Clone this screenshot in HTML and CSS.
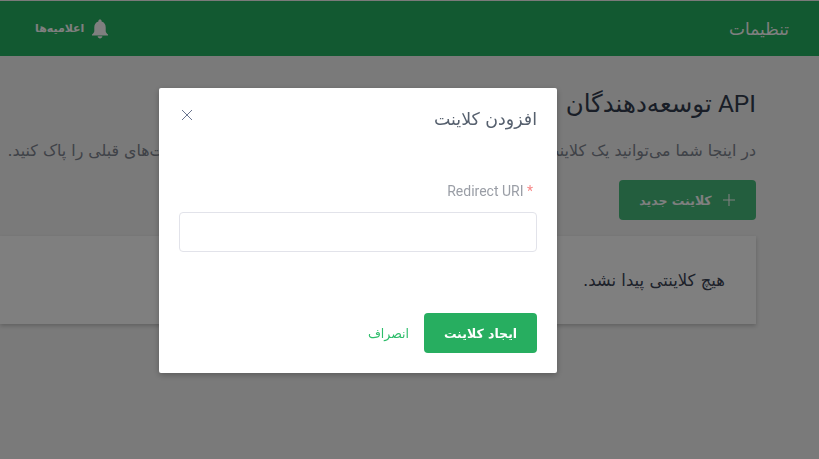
FILE: index.html
```html
<!DOCTYPE html>
<html lang="fa" dir="rtl">
<head>
    <meta charset="UTF-8">
    <meta name="viewport" content="width=device-width, initial-scale=1.0">
    <title>تنظیمات</title>
    <link rel="stylesheet" href="styles.css">
</head>
<body>
    <header class="topbar">
        <div class="topbar-title">تنظیمات</div>
        <div class="notif">
            <svg class="notif-icon" viewBox="0 0 20 20" width="20" height="20">
                <path fill="currentColor" d="M10 0.5c-1 0-1.600.7-1.600 1.600v.5C5.700 3.300 4.300 5.700 4.300 8.300v3.700c0 1.400-.9 2.400-2.300 3.400v1.100h16v-1.100c-1.400-1-2.300-2-2.300-3.400V8.300c0-2.600-1.400-5-4.100-5.700v-.5c0-.9-.6-1.600-1.600-1.600z"/>
                <path fill="currentColor" d="M7.600 17.300h4.800c-.2 1.300-1.200 2.200-2.400 2.200s-2.200-.9-2.400-2.200z"/>
            </svg>
            <span>اعلامیه‌ها</span>
        </div>
    </header>

    <main class="content">
        <h1 class="page-title">API توسعه‌دهندگان</h1>
        <p class="page-desc">در اینجا شما می‌توانید یک کلاینت جدید ایجاد کنید و در صورت نیاز نداشتن به آن‌ها دیگر کلاینت‌های قبلی را پاک کنید.</p>
        <button class="btn btn-new">
            <svg viewBox="0 0 14 14" width="14" height="14">
                <path stroke="currentColor" stroke-width="1.100" fill="none" d="M7 1v12M1 7h12"/>
            </svg>
            <span>کلاینت جدید</span>
        </button>
        <section class="empty-card">هیچ کلاینتی پیدا نشد.</section>
    </main>

    <div class="overlay">
        <div class="modal">
            <div class="modal-head">
                <h2 class="modal-title">افزودن کلاینت</h2>
                <svg class="modal-close" viewBox="0 0 12 12" width="12" height="12">
                    <path stroke="currentColor" stroke-width="1" fill="none" d="M1 1l10 10M11 1L1 11"/>
                </svg>
            </div>
            <div class="field">
                <label class="field-label"><span class="req">*</span> <bdi>Redirect URI</bdi></label>
                <input class="field-input" type="text">
            </div>
            <div class="modal-foot">
                <button class="btn btn-create">ایجاد کلاینت</button>
                <a class="link-cancel">انصراف</a>
            </div>
        </div>
    </div>
</body>
</html>
```

FILE: styles.css
```css
html, body {
    height: 100%;
}
body {
    margin: 0;
    background-color: #f4f4f4;
    font-family: "DejaVu Sans", "Noto Sans", sans-serif;
    color: #333c4e;
    overflow: hidden;
}
.topbar {
    margin-top: 1px;
    height: 55px;
    background-color: #25b262;
    color: #fff;
    display: flex;
    justify-content: space-between;
    align-items: center;
    padding: 0 30px 0 35px;
}
.topbar-title {
    font-size: 17px;
}
.notif {
    display: flex;
    align-items: center;
    gap: 6px;
    font-size: 11px;
    font-weight: bold;
}
.notif-icon {
    color: #fff;
}
.content {
    padding: 0 63px 0 0;
    display: flex;
    flex-direction: column;
    align-items: flex-start;
}
.page-title {
    margin: 33px 0 0;
    font-family: "Roboto", "DejaVu Sans", sans-serif;
    font-size: 24.500px;
    font-weight: normal;
    line-height: 30px;
    white-space: nowrap;
}
.page-desc {
    margin: 21px 0 0;
    font-size: 15.800px;
    line-height: 22px;
    color: #7f8590;
    white-space: nowrap;
}
.btn {
    border: none;
    border-radius: 4px;
    color: #fff;
    font-family: inherit;
    font-weight: bold;
    font-size: 12.500px;
}
.btn-new {
    margin-top: 18px;
    width: 137px;
    height: 40px;
    background-color: #46bd7c;
    display: flex;
    justify-content: center;
    align-items: center;
    gap: 10px;
}
.empty-card {
    margin-top: 16px;
    width: 756px;
    height: 88px;
    box-sizing: border-box;
    padding-right: 31px;
    background-color: #fff;
    box-shadow: 0 2px 4px rgba(0, 0, 0, 0.2);
    display: flex;
    align-items: center;
    font-size: 16.500px;
    color: #3a4354;
}
.overlay {
    position: fixed;
    inset: 0;
    background-color: rgba(0, 0, 0, 0.5);
    display: flex;
    justify-content: flex-start;
    align-items: flex-start;
    padding: 88px 262px 0 0;
}
.modal {
    width: 398px;
    height: 285px;
    box-sizing: border-box;
    padding: 0 20px 20px;
    background-color: #fff;
    border-radius: 2px;
    box-shadow: 0 2px 6px rgba(0, 0, 0, 0.25);
    display: flex;
    flex-direction: column;
}
.modal-head {
    display: flex;
    justify-content: space-between;
    align-items: flex-start;
    height: 70px;
    padding-top: 17px;
    box-sizing: border-box;
}
.modal-title {
    margin: 0;
    font-size: 17.400px;
    font-weight: normal;
    line-height: 28px;
    color: #56606e;
}
.modal-close {
    margin-top: 4px;
    margin-left: 2px;
    color: #6b7690;
}
.field {
    margin-top: 25px;
    display: flex;
    flex-direction: column;
    gap: 13px;
}
.field-label {
    font-family: "Roboto", sans-serif;
    font-size: 14px;
    line-height: 16px;
    color: #9a9ea6;
    padding-right: 4px;
}
.req {
    color: #f78989;
}
.field-input {
    height: 40px;
    box-sizing: border-box;
    border: 1px solid #e2e3ea;
    border-radius: 4px;
    background: #fff;
}
.modal-foot {
    margin-top: auto;
    display: flex;
    align-items: center;
    gap: 15px;
}
.btn-create {
    width: 113px;
    height: 40px;
    background-color: #27ae60;
}
.link-cancel {
    color: #2ebd6b;
    font-size: 12.500px;
}
```
